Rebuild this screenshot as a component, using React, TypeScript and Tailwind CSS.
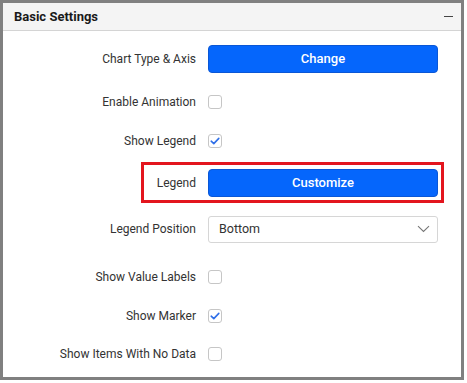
import React from "react";

const font = { fontFamily: "Roboto, 'Liberation Sans', sans-serif" };

function Checkbox({ checked }: { checked?: boolean }) {
  return (
    <span className="flex h-[14px] w-[14px] items-center justify-center rounded-[3px] border border-[#c6c6c6] bg-white">
      {checked && (
        <svg width="10" height="8" viewBox="0 0 10 8" fill="none">
          <path d="M1.2 4.2 L3.8 6.6 L8.8 1.4" stroke="#2f6fe8" strokeWidth="1.6" strokeLinecap="round" strokeLinejoin="round" />
        </svg>
      )}
    </span>
  );
}

function BlueButton({ label }: { label: string }) {
  return (
    <button className="h-[28px] w-[230px] rounded-[4px] border border-[#0a57d6] bg-[#0566fc] text-[13px] font-medium text-white">
      {label}
    </button>
  );
}

function Row({ label, className, children }: { label: string; className?: string; children: React.ReactNode }) {
  return (
    <div className={`flex h-[28px] items-center ${className ?? ""}`}>
      <div className="w-[193px] text-right text-[12px] text-[#333]">{label}</div>
      <div className="ml-[12px] flex items-center">{children}</div>
    </div>
  );
}

export default function App() {
  return (
    <div className="h-[383px] w-[467px] bg-white" style={font}>
      <div className="flex h-[380px] w-[464px] flex-col border-[3px] border-[#808080] bg-white">
        {/* Header */}
        <div className="flex h-[28px] shrink-0 items-center justify-between border-b border-[#d4d4d4] bg-[#f4f4f4] pl-[11px] pr-[8px]">
          <span className="text-[13px] font-bold text-[#1a1a1a]">Basic Settings</span>
          <span className="block h-[1.5px] w-[9px] bg-[#444]" />
        </div>

        {/* Body */}
        <div className="flex flex-col">
          <Row label="Chart Type & Axis" className="mt-[14px]">
            <BlueButton label="Change" />
          </Row>
          <Row label="Enable Animation" className="mt-[15px]">
            <Checkbox />
          </Row>
          <Row label="Show Legend" className="mt-[11px]">
            <Checkbox checked />
          </Row>

          {/* Highlighted legend row */}
          <div className="ml-[138px] mt-[7px] flex h-[41px] w-[303px] items-center border-[3px] border-[#e3151e]">
            <div className="w-[52px] text-right text-[12px] text-[#333]">Legend</div>
            <div className="ml-[12px]">
              <BlueButton label="Customize" />
            </div>
          </div>

          <Row label="Legend Position" className="mt-[12px]">
            <div className="flex h-[27px] w-[230px] items-center justify-between rounded-[3px] border border-[#d6d6d6] bg-white pl-[10px] pr-[7px]">
              <span className="text-[12.5px] text-[#333]">Bottom</span>
              <svg width="13" height="8" viewBox="0 0 13 8" fill="none">
                <path d="M1 1.2 L6.5 6.5 L12 1.2" stroke="#777" strokeWidth="1.1" />
              </svg>
            </div>
          </Row>
          <Row label="Show Value Labels" className="mt-[20px]">
            <Checkbox />
          </Row>
          <Row label="Show Marker" className="mt-[11px]">
            <Checkbox checked />
          </Row>
          <Row label="Show Items With No Data" className="mt-[10px]">
            <Checkbox />
          </Row>
        </div>
      </div>
    </div>
  );
}
